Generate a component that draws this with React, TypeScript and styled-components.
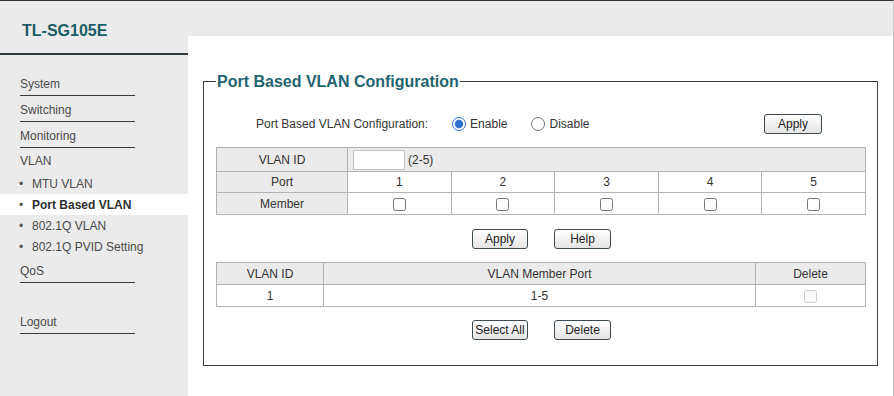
import styled, { createGlobalStyle } from 'styled-components';

const GlobalStyle = createGlobalStyle`
  html, body {
    margin: 0;
    padding: 0;
    background: #ffffff;
  }
  body {
    font-family: "Liberation Sans", Arial, sans-serif;
    font-size: 12px;
    color: #333;
  }
  * {
    box-sizing: border-box;
  }
`;

// --- Shell ---
const Page = styled.div`
  width: 894px;
  height: 396px;
  display: grid;
  grid-template-columns: 188px 1fr;
  background: #ebebeb;
  border-top: 1px solid #333;
  border-right: 1px solid #c8c8c8;
  overflow: hidden;
`;

// --- Sidebar ---
const Sidebar = styled.nav`
  display: flex;
  flex-direction: column;
`;

const Brand = styled.div`
  height: 54px;
  padding: 20px 0 0 22px;
  border-bottom: 2px solid #2f3b3e;
  font-size: 16px;
  font-weight: bold;
  line-height: 19px;
  color: #1b5c66;
`;

const Menu = styled.ul<{ $top?: number }>`
  list-style: none;
  margin: ${({ $top }) => $top ?? 0}px 0 0 0;
  padding: 0;
`;

const MenuItem = styled.li<{ $plain?: boolean; $gap?: number }>`
  margin: ${({ $gap }) => $gap ?? 0}px 0 0 20px;
  width: 115px;
  height: ${({ $plain }) => ($plain ? 25 : 26)}px;
  padding-top: ${({ $plain }) => ($plain ? 5 : 6)}px;
  line-height: 16px;
  color: #4a4a4a;
  border-bottom: ${({ $plain }) => ($plain ? 'none' : '1px solid #3a3a3a')};
`;

const SubItem = styled.li<{ $active?: boolean }>`
  display: flex;
  align-items: center;
  height: 21px;
  padding-left: 19px;
  color: ${({ $active }) => ($active ? '#2f2f2f' : '#4a4a4a')};
  font-weight: ${({ $active }) => ($active ? 'bold' : 'normal')};
  background: ${({ $active }) => ($active ? '#ffffff' : 'transparent')};

  &::before {
    content: '•';
    width: 13px;
    font-weight: normal;
    color: #555;
  }
`;

// --- Content ---
const Main = styled.main`
  padding-top: 35px;
  display: flex;
`;

const Panel = styled.section`
  flex: 1;
  background: #ffffff;
  padding: 36px 15px 0 15px;
`;

const Frame = styled.fieldset`
  margin: 0;
  height: 294px;
  padding: 0 11px 0 12px;
  border: 1px solid #3c3c3c;
`;

const Legend = styled.legend`
  padding: 0 1px;
  margin-left: 0;
  font-size: 16px;
  line-height: 19px;
  font-weight: bold;
  color: #1f6470;
`;

const Body = styled.div`
  display: flex;
  flex-direction: column;
  padding-top: 20px;
`;

const ModeRow = styled.div`
  display: flex;
  align-items: center;
  height: 26px;
  padding-left: 40px;
  padding-right: 44px;
`;

const ModeLabel = styled.span`
  margin-right: 24px;
`;

const RadioOption = styled.label`
  display: flex;
  align-items: center;
  gap: 4px;
  margin-right: 24px;
`;

const Radio = styled.input`
  margin: 0;
  width: 14px;
  height: 14px;
  accent-color: #2f72d6;
`;

const Button = styled.button<{ $width?: number }>`
  width: ${({ $width }) => $width ?? 56}px;
  height: 20px;
  padding: 0;
  font-family: inherit;
  font-size: 12px;
  color: #222;
  border: 1px solid #3d4a52;
  border-radius: 3px;
  background: linear-gradient(#ffffff, #e4e4e4);
`;

const PushRight = styled.div`
  margin-left: auto;
`;

const Grid = styled.table<{ $top: number }>`
  width: 650px;
  border-collapse: collapse;
  table-layout: fixed;
  margin-top: ${({ $top }) => $top}px;
`;

const Cell = styled.td<{ $head?: boolean; $h?: number; $left?: boolean }>`
  height: ${({ $h }) => $h ?? 22}px;
  padding: 0;
  border: 1px solid #b3b3b3;
  text-align: ${({ $left }) => ($left ? 'left' : 'center')};
  vertical-align: middle;
  background: ${({ $head }) => ($head ? '#ebebeb' : '#ffffff')};
  color: #333;
`;

const IdWrap = styled.div`
  display: flex;
  align-items: center;
  gap: 3px;
  padding-left: 5px;
`;

const IdInput = styled.input`
  width: 52px;
  height: 20px;
  margin: 0;
  border: 1px solid #b9c3cc;
  background: #fff;
`;

const Check = styled.input`
  margin: 0;
  width: 13px;
  height: 13px;
  vertical-align: middle;
`;

const ButtonRow = styled.div<{ $top: number }>`
  display: flex;
  justify-content: center;
  gap: 26px;
  margin-top: ${({ $top }) => $top}px;
  padding-left: 1px;
`;

const ports = [1, 2, 3, 4, 5];

export default function App() {
  return (
    <>
      <GlobalStyle />
      <Page>
        <Sidebar>
          <Brand>TL-SG105E</Brand>
          <Menu $top={15}>
            <MenuItem>System</MenuItem>
            <MenuItem>Switching</MenuItem>
            <MenuItem>Monitoring</MenuItem>
            <MenuItem $plain>VLAN</MenuItem>
          </Menu>
          <Menu>
            <SubItem>MTU VLAN</SubItem>
            <SubItem $active>Port Based VLAN</SubItem>
            <SubItem>802.1Q VLAN</SubItem>
            <SubItem>802.1Q PVID Setting</SubItem>
          </Menu>
          <Menu>
            <MenuItem>QoS</MenuItem>
            <MenuItem $gap={25}>Logout</MenuItem>
          </Menu>
        </Sidebar>

        <Main>
          <Panel>
            <Frame>
              <Legend>Port Based VLAN Configuration</Legend>
              <Body>
                <ModeRow>
                  <ModeLabel>Port Based VLAN Configuration:</ModeLabel>
                  <RadioOption>
                    <Radio type="radio" name="mode" defaultChecked />
                    Enable
                  </RadioOption>
                  <RadioOption>
                    <Radio type="radio" name="mode" />
                    Disable
                  </RadioOption>
                  <PushRight>
                    <Button $width={58}>Apply</Button>
                  </PushRight>
                </ModeRow>

                <Grid $top={10}>
                  <colgroup>
                    <col style={{ width: 131 }} />
                    {ports.map((p) => (
                      <col key={p} />
                    ))}
                  </colgroup>
                  <tbody>
                    <tr>
                      <Cell $head $h={24}>VLAN ID</Cell>
                      <Cell $head $left colSpan={5}>
                        <IdWrap>
                          <IdInput type="text" />
                          <span>(2-5)</span>
                        </IdWrap>
                      </Cell>
                    </tr>
                    <tr>
                      <Cell $head $h={21}>Port</Cell>
                      {ports.map((p) => (
                        <Cell key={p} $h={21}>{p}</Cell>
                      ))}
                    </tr>
                    <tr>
                      <Cell $head>Member</Cell>
                      {ports.map((p) => (
                        <Cell key={p}>
                          <Check type="checkbox" />
                        </Cell>
                      ))}
                    </tr>
                  </tbody>
                </Grid>

                <ButtonRow $top={14}>
                  <Button>Apply</Button>
                  <Button $width={57}>Help</Button>
                </ButtonRow>

                <Grid $top={13}>
                  <colgroup>
                    <col style={{ width: 107 }} />
                    <col />
                    <col style={{ width: 110 }} />
                  </colgroup>
                  <tbody>
                    <tr>
                      <Cell $head>VLAN ID</Cell>
                      <Cell $head>VLAN Member Port</Cell>
                      <Cell $head>Delete</Cell>
                    </tr>
                    <tr>
                      <Cell>1</Cell>
                      <Cell>1-5</Cell>
                      <Cell>
                        <Check type="checkbox" disabled />
                      </Cell>
                    </tr>
                  </tbody>
                </Grid>

                <ButtonRow $top={13}>
                  <Button>Select All</Button>
                  <Button $width={57}>Delete</Button>
                </ButtonRow>
              </Body>
            </Frame>
          </Panel>
        </Main>
      </Page>
    </>
  );
}
